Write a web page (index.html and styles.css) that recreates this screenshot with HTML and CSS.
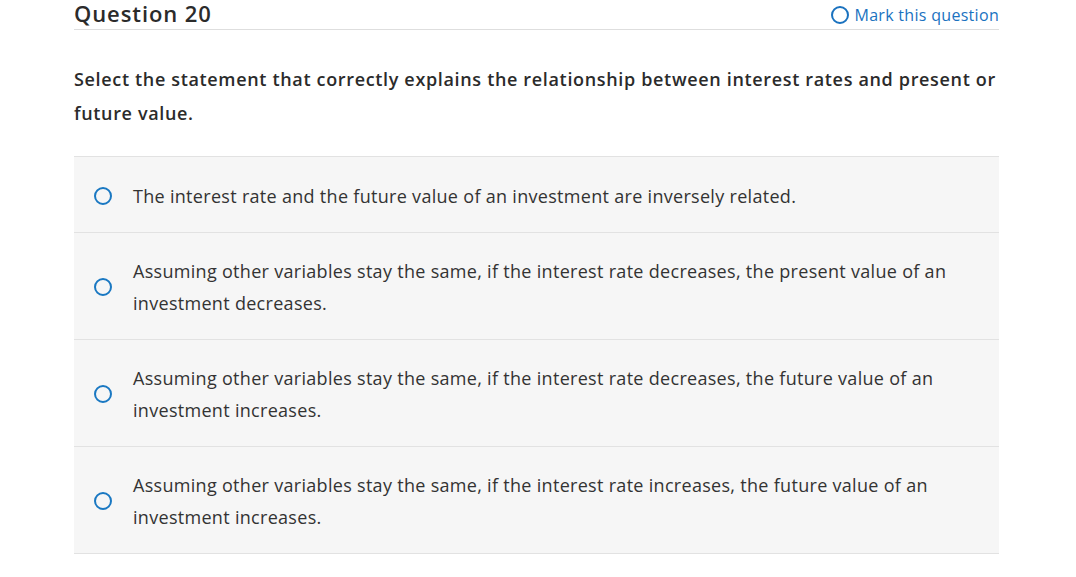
FILE: index.html
```html
<!DOCTYPE html>
<html lang="en">
<head>
<meta charset="utf-8">
<title>Question 20</title>
<link rel="stylesheet" href="styles.css">
</head>
<body>
<div class="page">
  <div class="header">
    <h2 class="title">Question 20</h2>
    <a class="mark" href="#"><span class="mark-circle"></span>Mark this question</a>
  </div>
  <p class="prompt">Select the statement that correctly explains the relationship between interest rates and present or future value.</p>
  <ul class="options">
    <li class="option"><span class="radio"></span><span class="opt-text">The interest rate and the future value of an investment are inversely related.</span></li>
    <li class="option"><span class="radio"></span><span class="opt-text">Assuming other variables stay the same, if the interest rate decreases, the present value of an investment decreases.</span></li>
    <li class="option"><span class="radio"></span><span class="opt-text">Assuming other variables stay the same, if the interest rate decreases, the future value of an investment increases.</span></li>
    <li class="option"><span class="radio"></span><span class="opt-text">Assuming other variables stay the same, if the interest rate increases, the future value of an investment increases.</span></li>
  </ul>
</div>
</body>
</html>
```

FILE: styles.css
```css
html, body {
  margin: 0;
  padding: 0;
  background: #ffffff;
}
body {
  font-family: "Open Sans", "Liberation Sans", sans-serif;
  color: #2b2b2b;
}
.page {
  margin-left: 74px;
  width: 925px;
}
.header {
  display: flex;
  justify-content: space-between;
  align-items: flex-start;
  height: 29px;
  border-bottom: 1px solid #dedede;
}
.title {
  margin: 0;
  font-size: 22px;
  font-weight: 600;
  letter-spacing: 0.9px;
  line-height: 26px;
  color: #2b2b2b;
}
.mark {
  display: flex;
  align-items: center;
  gap: 5px;
  font-size: 16px;
  letter-spacing: 0.3px;
  color: #1a72bf;
  text-decoration: none;
  padding-top: 4px;
}
.mark-circle {
  width: 14px;
  height: 14px;
  border: 2px solid #1a72bf;
  border-radius: 50%;
}
.prompt {
  margin: 32px 0 26px;
  font-size: 18px;
  font-weight: 600;
  letter-spacing: 0.66px;
  line-height: 34px;
}
.options {
  list-style: none;
  margin: 0;
  padding: 0;
  border-bottom: 1px solid #e2e2e2;
}
.option {
  display: flex;
  align-items: center;
  gap: 21px;
  box-sizing: border-box;
  min-height: 76px;
  padding: 22px 40px 20px 20px;
  background: #f6f6f6;
  border-top: 1px solid #e2e2e2;
}
.radio {
  flex: none;
  width: 14px;
  height: 14px;
  border: 2.5px solid #1a78c2;
  border-radius: 50%;
}
.opt-text {
  font-size: 18px;
  letter-spacing: 0.3px;
  line-height: 32px;
  color: #333333;
}
```
